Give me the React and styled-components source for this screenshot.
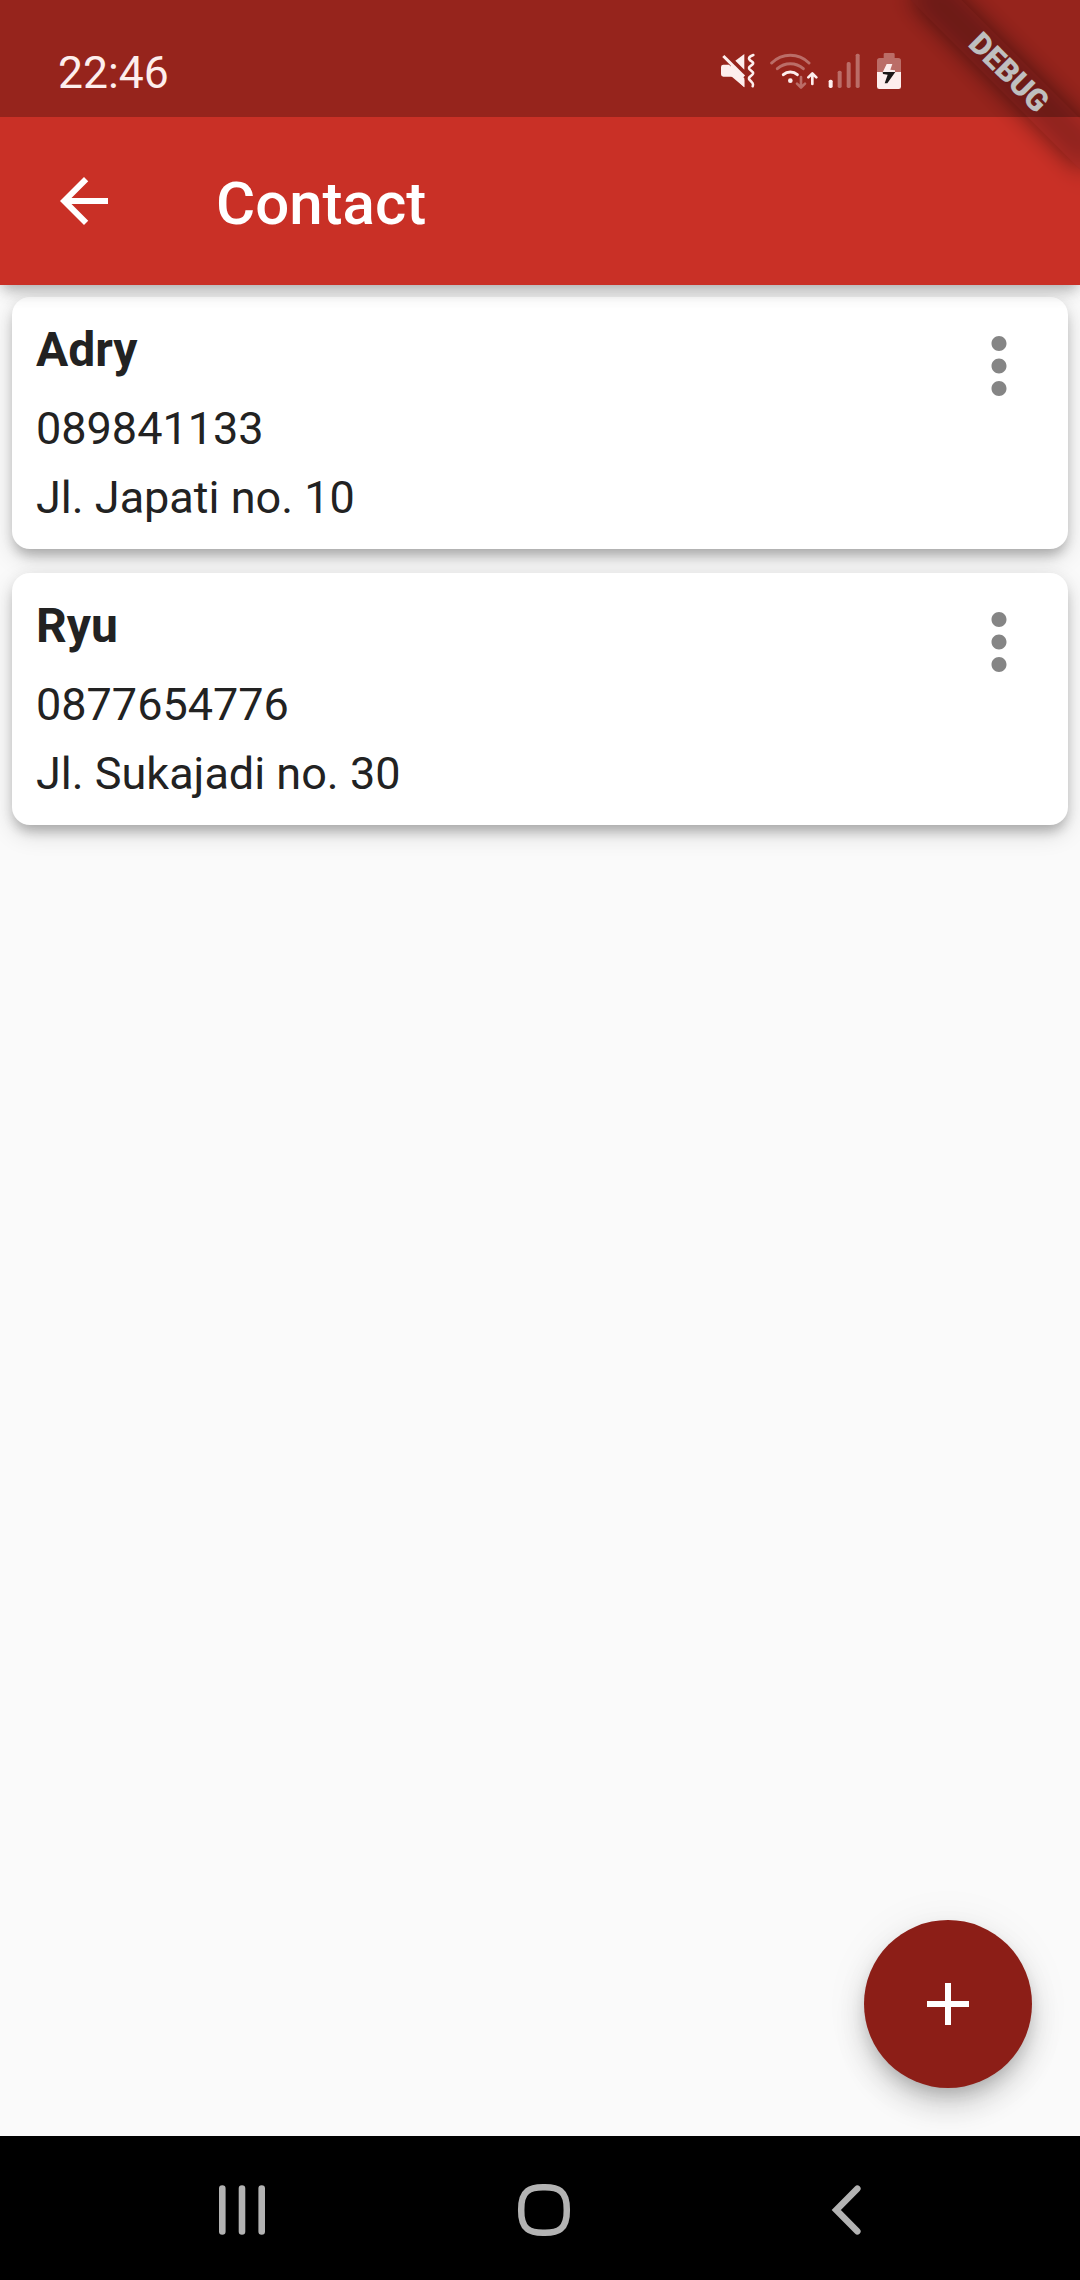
import React from "react";
import styled, { createGlobalStyle } from "styled-components";

const GlobalStyle = createGlobalStyle`
  * { box-sizing: border-box; }
  body {
    margin: 0;
    font-family: Roboto, "Noto Sans", sans-serif;
    background: #fafafa;
  }
  svg { display: block; }
`;

const Screen = styled.div`
  position: relative;
  display: flex;
  flex-direction: column;
  width: 1080px;
  height: 2280px;
  overflow: hidden;
  background: #fafafa;
`;

const Header = styled.header`
  position: relative;
  z-index: 1;
  background: #c93026;
  box-shadow: 0 6px 12px -3px rgba(0, 0, 0, 0.2),
    0 12px 15px -3px rgba(0, 0, 0, 0.1), 0 3px 24px 0 rgba(0, 0, 0, 0.06);
`;

const StatusBar = styled.div`
  position: relative;
  z-index: 2;
  display: flex;
  justify-content: space-between;
  height: 117px;
  padding: 46px 178px 0 58px;
  background: rgba(0, 0, 0, 0.25);
  color: #fdeeed;
`;

const Clock = styled.time`
  margin-top: 1px;
  font-size: 44.5px;
  line-height: 53px;
`;

const StatusIcons = styled.div`
  display: flex;
  align-items: flex-start;
  gap: 15px;
  padding-top: 6px;
`;

const Network = styled.div`
  display: flex;
  gap: 10px;
`;

const Toolbar = styled.div`
  display: flex;
  align-items: center;
  height: 168px;
  padding-left: 48px;
  color: #fff;
`;

const IconButton = styled.button`
  display: flex;
  padding: 0;
  border: 0;
  background: none;
  color: ${(p) => p.$color};
`;

const Title = styled.h1`
  margin: 5px 0 0 96px;
  font-size: 60px;
  line-height: 70px;
  font-weight: 500;
`;

const BannerClip = styled.div`
  position: absolute;
  z-index: 1;
  top: 0;
  right: 0;
  width: 260px;
  height: 260px;
  overflow: hidden;
  pointer-events: none;
`;

const Banner = styled.div`
  position: absolute;
  top: 54px;
  right: -48px;
  width: 240px;
  height: 36px;
  transform: rotate(45deg);

  &::before,
  &::after {
    content: "";
    position: absolute;
    inset: 0;
  }
  &::before {
    background: rgba(0, 0, 0, 0.5);
    filter: blur(12px);
  }
  &::after {
    background: rgba(168, 42, 37, 0.627);
  }
`;

const BannerText = styled.span`
  position: relative;
  z-index: 1;
  display: block;
  padding-left: 2px;
  color: #fff;
  font-size: 30.6px;
  line-height: 36px;
  font-weight: 900;
  text-align: center;
`;

const List = styled.main`
  flex: 1;
  display: flex;
  flex-direction: column;
  gap: 24px;
  padding: 12px;
`;

const Card = styled.article`
  display: flex;
  justify-content: space-between;
  align-items: flex-start;
  height: 252px;
  padding: 24px;
  border-radius: 18px;
  background: #fff;
  color: #222;
  box-shadow: 0 9px 12px -3px rgba(0, 0, 0, 0.2),
    0 9px 24px 0 rgba(0, 0, 0, 0.14), 0 3px 15px 0 rgba(0, 0, 0, 0.06);
`;

const Name = styled.h2`
  margin: 1px 0 24px;
  font-size: 48px;
  line-height: 56px;
  font-weight: 700;
`;

const Detail = styled.p`
  margin: 0 0 16px;
  font-size: 45px;
  line-height: 53px;
`;

const Fab = styled.button`
  position: absolute;
  right: 48px;
  bottom: 192px;
  display: flex;
  align-items: center;
  justify-content: center;
  width: 168px;
  height: 168px;
  padding: 0;
  border: 0;
  border-radius: 50%;
  background: #8c1e17;
  color: #fff;
  box-shadow: 0 9px 15px -3px rgba(0, 0, 0, 0.16),
    0 18px 30px 0 rgba(0, 0, 0, 0.16), 0 3px 48px 0 rgba(0, 0, 0, 0.06);
`;

const NavBar = styled.nav`
  display: flex;
  align-items: center;
  justify-content: space-between;
  height: 144px;
  padding: 4px 208px 0 214px;
  background: #000;
  color: #b3b3b3;
`;

const MaterialIcon = ({ size, d }) => (
  <svg width={size} height={size} viewBox="0 0 24 24" fill="currentColor">
    <path d={d} />
  </svg>
);

const MuteIcon = () => (
  <svg width="35" height="38" viewBox="60 66 105 114" fill="currentColor">
    <path d="M70 104H87L101 118L133 149V172L101 140H70Q63 140 63 133V111Q63 104 70 104Z" />
    <path d="M70 78L132 140" fill="none" stroke="currentColor" strokeWidth="9" />
    <path d="M92 104L133 145V172L92 137Z" />
    <path d="M106 92L133 72V119Z" />
    <path
      d="M160 75Q146 80 147 86Q149 91 155 94Q162 98 158 103L149 110Q145 114 149 118L157 125Q162 129 157 134L149 141Q145 145 149 150L155 156Q161 161 158 169"
      fill="none"
      stroke="currentColor"
      strokeWidth="7.5"
      strokeLinecap="round"
    />
  </svg>
);

const WifiIcon = () => (
  <svg width="48" height="38" viewBox="209 66 144 114" fill="none" stroke="currentColor">
    <g strokeWidth="9" strokeLinecap="round">
      <path d="M214 99Q238 76 270 76Q302 76 326 99" opacity="0.36" />
      <path d="M231 116Q248 101 270 101Q292 101 309 116" opacity="0.36" />
      <path d="M249 134Q258 126 270 126Q282 126 291 134" />
    </g>
    <circle cx="270" cy="152" r="7" fill="currentColor" stroke="none" />
    <g strokeWidth="8" strokeLinecap="round" strokeLinejoin="round">
      <path d="M302 141V172M290 161L302 173L314 161" opacity="0.36" />
      <path d="M336 162V132M324 142L336 130L348 142" />
    </g>
  </svg>
);

const SignalIcon = () => (
  <svg width="33" height="38" viewBox="384 66 99 114" fill="currentColor">
    <rect x="386" y="149" width="12" height="25" rx="5" />
    <rect x="413" y="122" width="12" height="52" rx="5" opacity="0.36" />
    <rect x="440" y="96" width="12" height="78" rx="5" opacity="0.36" />
    <rect x="467" y="71" width="12" height="103" rx="5" opacity="0.36" />
  </svg>
);

const BatteryIcon = () => (
  <svg width="26" height="38" viewBox="528 66 78 114" fill="currentColor">
    <path
      d="M531 126V92Q531 84 539 84H551V73Q551 69 555 69H580Q584 69 584 73V84H595Q603 84 603 92V126Z"
      opacity="0.36"
    />
    <path d="M531 126H603V170Q603 177 596 177H538Q531 177 531 170Z" />
    <path d="M560 102H577L571 119L585 121V127H548Z" />
    <path d="M548 126H586L562 160H554L563 134L549 132Z" fill="#1c1817" />
  </svg>
);

const RecentsIcon = () => (
  <svg width="56" height="56" viewBox="214 2182 56 56" stroke="currentColor" strokeWidth="6.6" strokeLinecap="round">
    <path d="M222.3 2188.5V2231.5M242 2188.5V2231.5M261.7 2188.5V2231.5" />
  </svg>
);

const HomeIcon = () => (
  <svg width="56" height="56" viewBox="515 2182 56 56" fill="none" stroke="currentColor" strokeWidth="6.5">
    <path d="M544 2187.2Q556 2187 560.8 2191.2Q567 2196 566.8 2210Q567 2224 560.8 2228.8Q556 2233 544 2232.8Q532 2233 527.2 2228.8Q521 2224 521.2 2210Q521 2196 527.2 2191.2Q532 2187 544 2187.2Z" />
  </svg>
);

const NavBackIcon = () => (
  <svg width="56" height="56" viewBox="816 2182 56 56" fill="none" stroke="currentColor" strokeWidth="6.6" strokeLinecap="round">
    <path d="M857.3 2188.7L836.3 2210L857.3 2231.3" />
  </svg>
);

const ARROW_BACK = "M20 11H7.83l5.59-5.59L12 4l-8 8 8 8 1.41-1.41L7.83 13H20v-2z";
const MORE_VERT =
  "M12 8c1.1 0 2-.9 2-2s-.9-2-2-2-2 .9-2 2 .9 2 2 2zm0 2c-1.1 0-2 .9-2 2s.9 2 2 2 2-.9 2-2-.9-2-2-2zm0 6c-1.1 0-2 .9-2 2s.9 2 2 2 2-.9 2-2-.9-2-2-2z";
const ADD = "M19 13h-6v6h-2v-6H5v-2h6V5h2v6h6v2z";

const contacts = [
  { name: "Adry", phone: "089841133", address: "Jl. Japati no. 10" },
  { name: "Ryu", phone: "0877654776", address: "Jl. Sukajadi no. 30" },
];

export default function App() {
  return (
    <>
      <GlobalStyle />
      <Screen>
        <Header>
          <StatusBar>
            <Clock>22:46</Clock>
            <StatusIcons>
              <MuteIcon />
              <Network>
                <WifiIcon />
                <SignalIcon />
              </Network>
              <BatteryIcon />
            </StatusIcons>
          </StatusBar>
          <Toolbar>
            <IconButton $color="#fff" aria-label="Back">
              <MaterialIcon size={72} d={ARROW_BACK} />
            </IconButton>
            <Title>Contact</Title>
          </Toolbar>
          <BannerClip>
            <Banner>
              <BannerText>DEBUG</BannerText>
            </Banner>
          </BannerClip>
        </Header>
        <List>
          {contacts.map((c) => (
            <Card key={c.name}>
              <div>
                <Name>{c.name}</Name>
                <Detail>{c.phone}</Detail>
                <Detail>{c.address}</Detail>
              </div>
              <IconButton $color="#858585" aria-label="More options">
                <MaterialIcon size={90} d={MORE_VERT} />
              </IconButton>
            </Card>
          ))}
        </List>
        <Fab aria-label="Add contact">
          <MaterialIcon size={72} d={ADD} />
        </Fab>
        <NavBar>
          <RecentsIcon />
          <HomeIcon />
          <NavBackIcon />
        </NavBar>
      </Screen>
    </>
  );
}
